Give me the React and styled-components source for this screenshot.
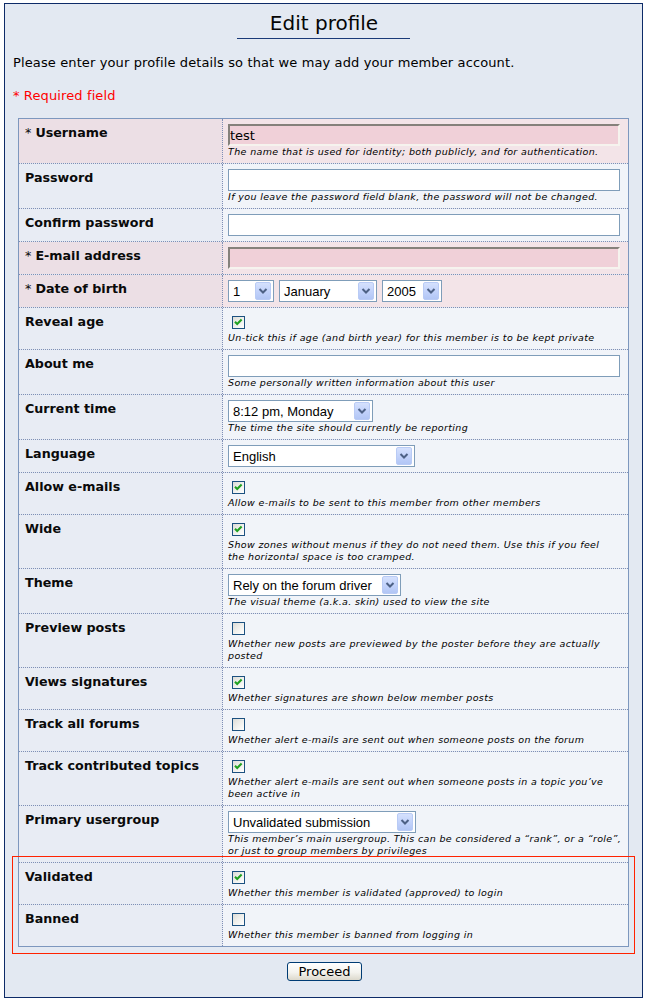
import React from 'react';
import styled, { createGlobalStyle, css } from 'styled-components';

const GlobalStyle = createGlobalStyle`
  html, body { margin: 0; padding: 0; background: #ffffff; }
  body {
    padding: 3px 0 0 4px;
    font-family: "DejaVu Sans", Verdana, sans-serif;
    color: #000;
  }
`;

const Panel = styled.form`
  width: 639px;
  box-sizing: border-box;
  border: 1px solid #0d2b68;
  background: #e3e9f2;
  padding: 7px 0 16px;
  display: flex;
  flex-direction: column;
`;

const Title = styled.h1`
  align-self: center;
  width: 173px;
  margin: 0;
  padding: 0 0 3px 1px;
  box-sizing: border-box;
  font: 400 20px/24px "DejaVu Sans", Verdana, sans-serif;
  text-align: center;
  color: #050505;
  border-bottom: 1px solid #1a3a78;
`;

const Intro = styled.p`
  margin: ${(p) => p.$top}px 0 0;
  padding: 0 8px;
  font-size: 13px;
  line-height: 16px;
  letter-spacing: 0.12px;
  color: ${(p) => (p.$warn ? '#ff0000' : '#000')};
`;

const Table = styled.div`
  margin: 14px 13px 0;
  border: 1px solid #7d97be;
  display: flex;
  flex-direction: column;
`;

const Row = styled.div`
  display: grid;
  grid-template-columns: 204px 1fr;
  border-bottom: 1px dotted #7f8fb5;
  &:last-child { border-bottom: none; }
`;

const Highlight = styled.div`
  position: relative;
  display: flex;
  flex-direction: column;
  &::after {
    content: '';
    position: absolute;
    top: -7px;
    left: -7px;
    right: -7px;
    bottom: -8px;
    border: 1px solid #ff2200;
    pointer-events: none;
  }
`;

const tones = {
  normal: { label: '#e8ecf4', value: '#f1f4f9' },
  pink: { label: '#ecdfe5', value: '#f3e4e8' },
};

const Label = styled.div`
  box-sizing: border-box;
  padding: 6px 6px;
  border-right: 1px dotted #7f8fb5;
  background: ${(p) => tones[p.$tone].label};
  font-weight: 700;
  font-size: 12.7px;
  line-height: 15px;
  color: #0a0a0a;
`;

const Star = styled.span`
  font-weight: 400;
`;

const Value = styled.div`
  padding: 5px 8px 5px 5px;
  background: ${(p) => tones[p.$tone].value};
  min-width: 0;
`;

const TextInput = styled.input`
  display: block;
  width: 100%;
  height: 22px;
  box-sizing: border-box;
  margin: 0;
  padding: 0 2px;
  border: 1px solid #7f9db9;
  background: #ffffff;
  font: 13px "DejaVu Sans", Verdana, sans-serif;
  color: #000;
  outline: none;
  ${(p) =>
    p.$required &&
    css`
      padding: 0;
      border-width: 2px;
      border-style: solid;
      border-color: #85817b #f6f3ee #f6f3ee #85817b;
      background: #f0d0d8;
    `}
`;

const SelectRow = styled.div`
  display: flex;
  gap: 5px;
`;

const FakeSelect = styled.div`
  display: flex;
  align-items: center;
  box-sizing: border-box;
  height: 22px;
  border: 1px solid #7f9db9;
  background: #ffffff;
  font: 13px "Liberation Sans", Arial, sans-serif;
  color: #000;
`;

const SelectText = styled.span`
  flex: 1;
  padding-left: 4px;
  white-space: nowrap;
  overflow: hidden;
`;

const DropButton = styled.span`
  display: flex;
  align-items: center;
  justify-content: center;
  width: 16px;
  height: 18px;
  margin: 0 2px 0 1px;
  box-sizing: border-box;
  border: 1px solid #b9cbf5;
  border-radius: 2px;
  background: linear-gradient(to bottom, #d5e1fd 0%, #c3d3fb 50%, #b2c6f5 100%);
`;

const CheckBox = styled.span`
  display: flex;
  align-items: center;
  justify-content: center;
  width: 13px;
  height: 13px;
  box-sizing: border-box;
  margin: 3px 3px 3px 4px;
  border: 1px solid #1c5180;
  background: linear-gradient(135deg, #dcdcd7 0%, #eeeeea 45%, #ffffff 100%);
`;

const Desc = styled.div`
  font-size: 9.5px;
  line-height: 12px;
  letter-spacing: 0.36px;
  font-style: italic;
  color: #000;
`;

const DescLine = styled.span`
  display: block;
  white-space: nowrap;
`;

const Footer = styled.div`
  display: flex;
  justify-content: center;
  margin-top: 15px;
`;

const Proceed = styled.button`
  height: 19px;
  padding: 0 10px;
  margin: 0 0 0 2px;
  box-sizing: border-box;
  border: 1px solid #003c74;
  border-radius: 3px;
  background: linear-gradient(to bottom, #ffffff 0%, #f4f3ee 55%, #dcd8cc 100%);
  font: 13px/15px "DejaVu Sans", Verdana, sans-serif;
  color: #000;
`;

const Chevron = () => (
  <svg width="14" height="16" viewBox="0 0 14 16">
    <path d="M3.5 6 L7 9.5 L10.5 6" stroke="#4d6185" strokeWidth="2" fill="none" />
  </svg>
);

const Select = ({ value, width }) => (
  <FakeSelect style={{ width }}>
    <SelectText>{value}</SelectText>
    <DropButton>
      <Chevron />
    </DropButton>
  </FakeSelect>
);

const Check = ({ checked }) => (
  <CheckBox>
    {checked && (
      <svg width="11" height="11" viewBox="0 0 11 11">
        <path d="M2 4.8 L4.2 7 L8.6 2.6" stroke="#21a121" strokeWidth="2.1" fill="none" />
      </svg>
    )}
  </CheckBox>
);

const rows = [
  { label: 'Username', req: true, kind: 'text', value: 'test', desc: ['The name that is used for identity; both publicly, and for authentication.'] },
  { label: 'Password', kind: 'text', type: 'password', desc: ['If you leave the password field blank, the password will not be changed.'] },
  { label: 'Confirm password', kind: 'text', type: 'password' },
  { label: 'E-mail address', req: true, kind: 'text' },
  { label: 'Date of birth', req: true, kind: 'dob' },
  { label: 'Reveal age', kind: 'check', checked: true, desc: ['Un-tick this if age (and birth year) for this member is to be kept private'] },
  { label: 'About me', kind: 'text', desc: ['Some personally written information about this user'] },
  { label: 'Current time', kind: 'select', value: '8:12 pm, Monday', width: 145, desc: ['The time the site should currently be reporting'] },
  { label: 'Language', kind: 'select', value: 'English', width: 187 },
  { label: 'Allow e-mails', kind: 'check', checked: true, desc: ['Allow e-mails to be sent to this member from other members'] },
  { label: 'Wide', kind: 'check', checked: true, desc: ['Show zones without menus if they do not need them. Use this if you feel', 'the horizontal space is too cramped.'] },
  { label: 'Theme', kind: 'select', value: 'Rely on the forum driver', width: 173, desc: ['The visual theme (a.k.a. skin) used to view the site'] },
  { label: 'Preview posts', kind: 'check', checked: false, desc: ['Whether new posts are previewed by the poster before they are actually', 'posted'] },
  { label: 'Views signatures', kind: 'check', checked: true, desc: ['Whether signatures are shown below member posts'] },
  { label: 'Track all forums', kind: 'check', checked: false, desc: ['Whether alert e-mails are sent out when someone posts on the forum'] },
  { label: 'Track contributed topics', kind: 'check', checked: true, desc: ['Whether alert e-mails are sent out when someone posts in a topic you\u2019ve', 'been active in'] },
  { label: 'Primary usergroup', kind: 'select', value: 'Unvalidated submission', width: 188, desc: ['This member\u2019s main usergroup. This can be considered a \u201crank\u201d, or a \u201crole\u201d,', 'or just to group members by privileges'] },
];

const adminRows = [
  { label: 'Validated', kind: 'check', checked: true, desc: ['Whether this member is validated (approved) to login'] },
  { label: 'Banned', kind: 'check', checked: false, desc: ['Whether this member is banned from logging in'] },
];

const Control = ({ row }) => {
  switch (row.kind) {
    case 'text':
      return <TextInput type={row.type || 'text'} defaultValue={row.value || ''} $required={row.req} />;
    case 'dob':
      return (
        <SelectRow>
          <Select value="1" width={46} />
          <Select value="January" width={98} />
          <Select value="2005" width={60} />
        </SelectRow>
      );
    case 'select':
      return <Select value={row.value} width={row.width} />;
    case 'check':
      return <Check checked={row.checked} />;
    default:
      return null;
  }
};

const FieldRow = ({ row }) => {
  const tone = row.req ? 'pink' : 'normal';
  return (
    <Row>
      <Label $tone={tone}>
        {row.req && <Star>* </Star>}
        {row.label}
      </Label>
      <Value $tone={tone}>
        <Control row={row} />
        {row.desc && (
          <Desc>
            {row.desc.map((line) => (
              <DescLine key={line}>{line}</DescLine>
            ))}
          </Desc>
        )}
      </Value>
    </Row>
  );
};

export default function App() {
  return (
    <>
      <GlobalStyle />
      <Panel onSubmit={(e) => e.preventDefault()}>
        <Title>Edit profile</Title>
        <Intro $top={16}>Please enter your profile details so that we may add your member account.</Intro>
        <Intro $top={17} $warn>* Required field</Intro>
        <Table>
          {rows.map((row) => (
            <FieldRow key={row.label} row={row} />
          ))}
          <Highlight>
            {adminRows.map((row) => (
              <FieldRow key={row.label} row={row} />
            ))}
          </Highlight>
        </Table>
        <Footer>
          <Proceed type="submit">Proceed</Proceed>
        </Footer>
      </Panel>
    </>
  );
}
